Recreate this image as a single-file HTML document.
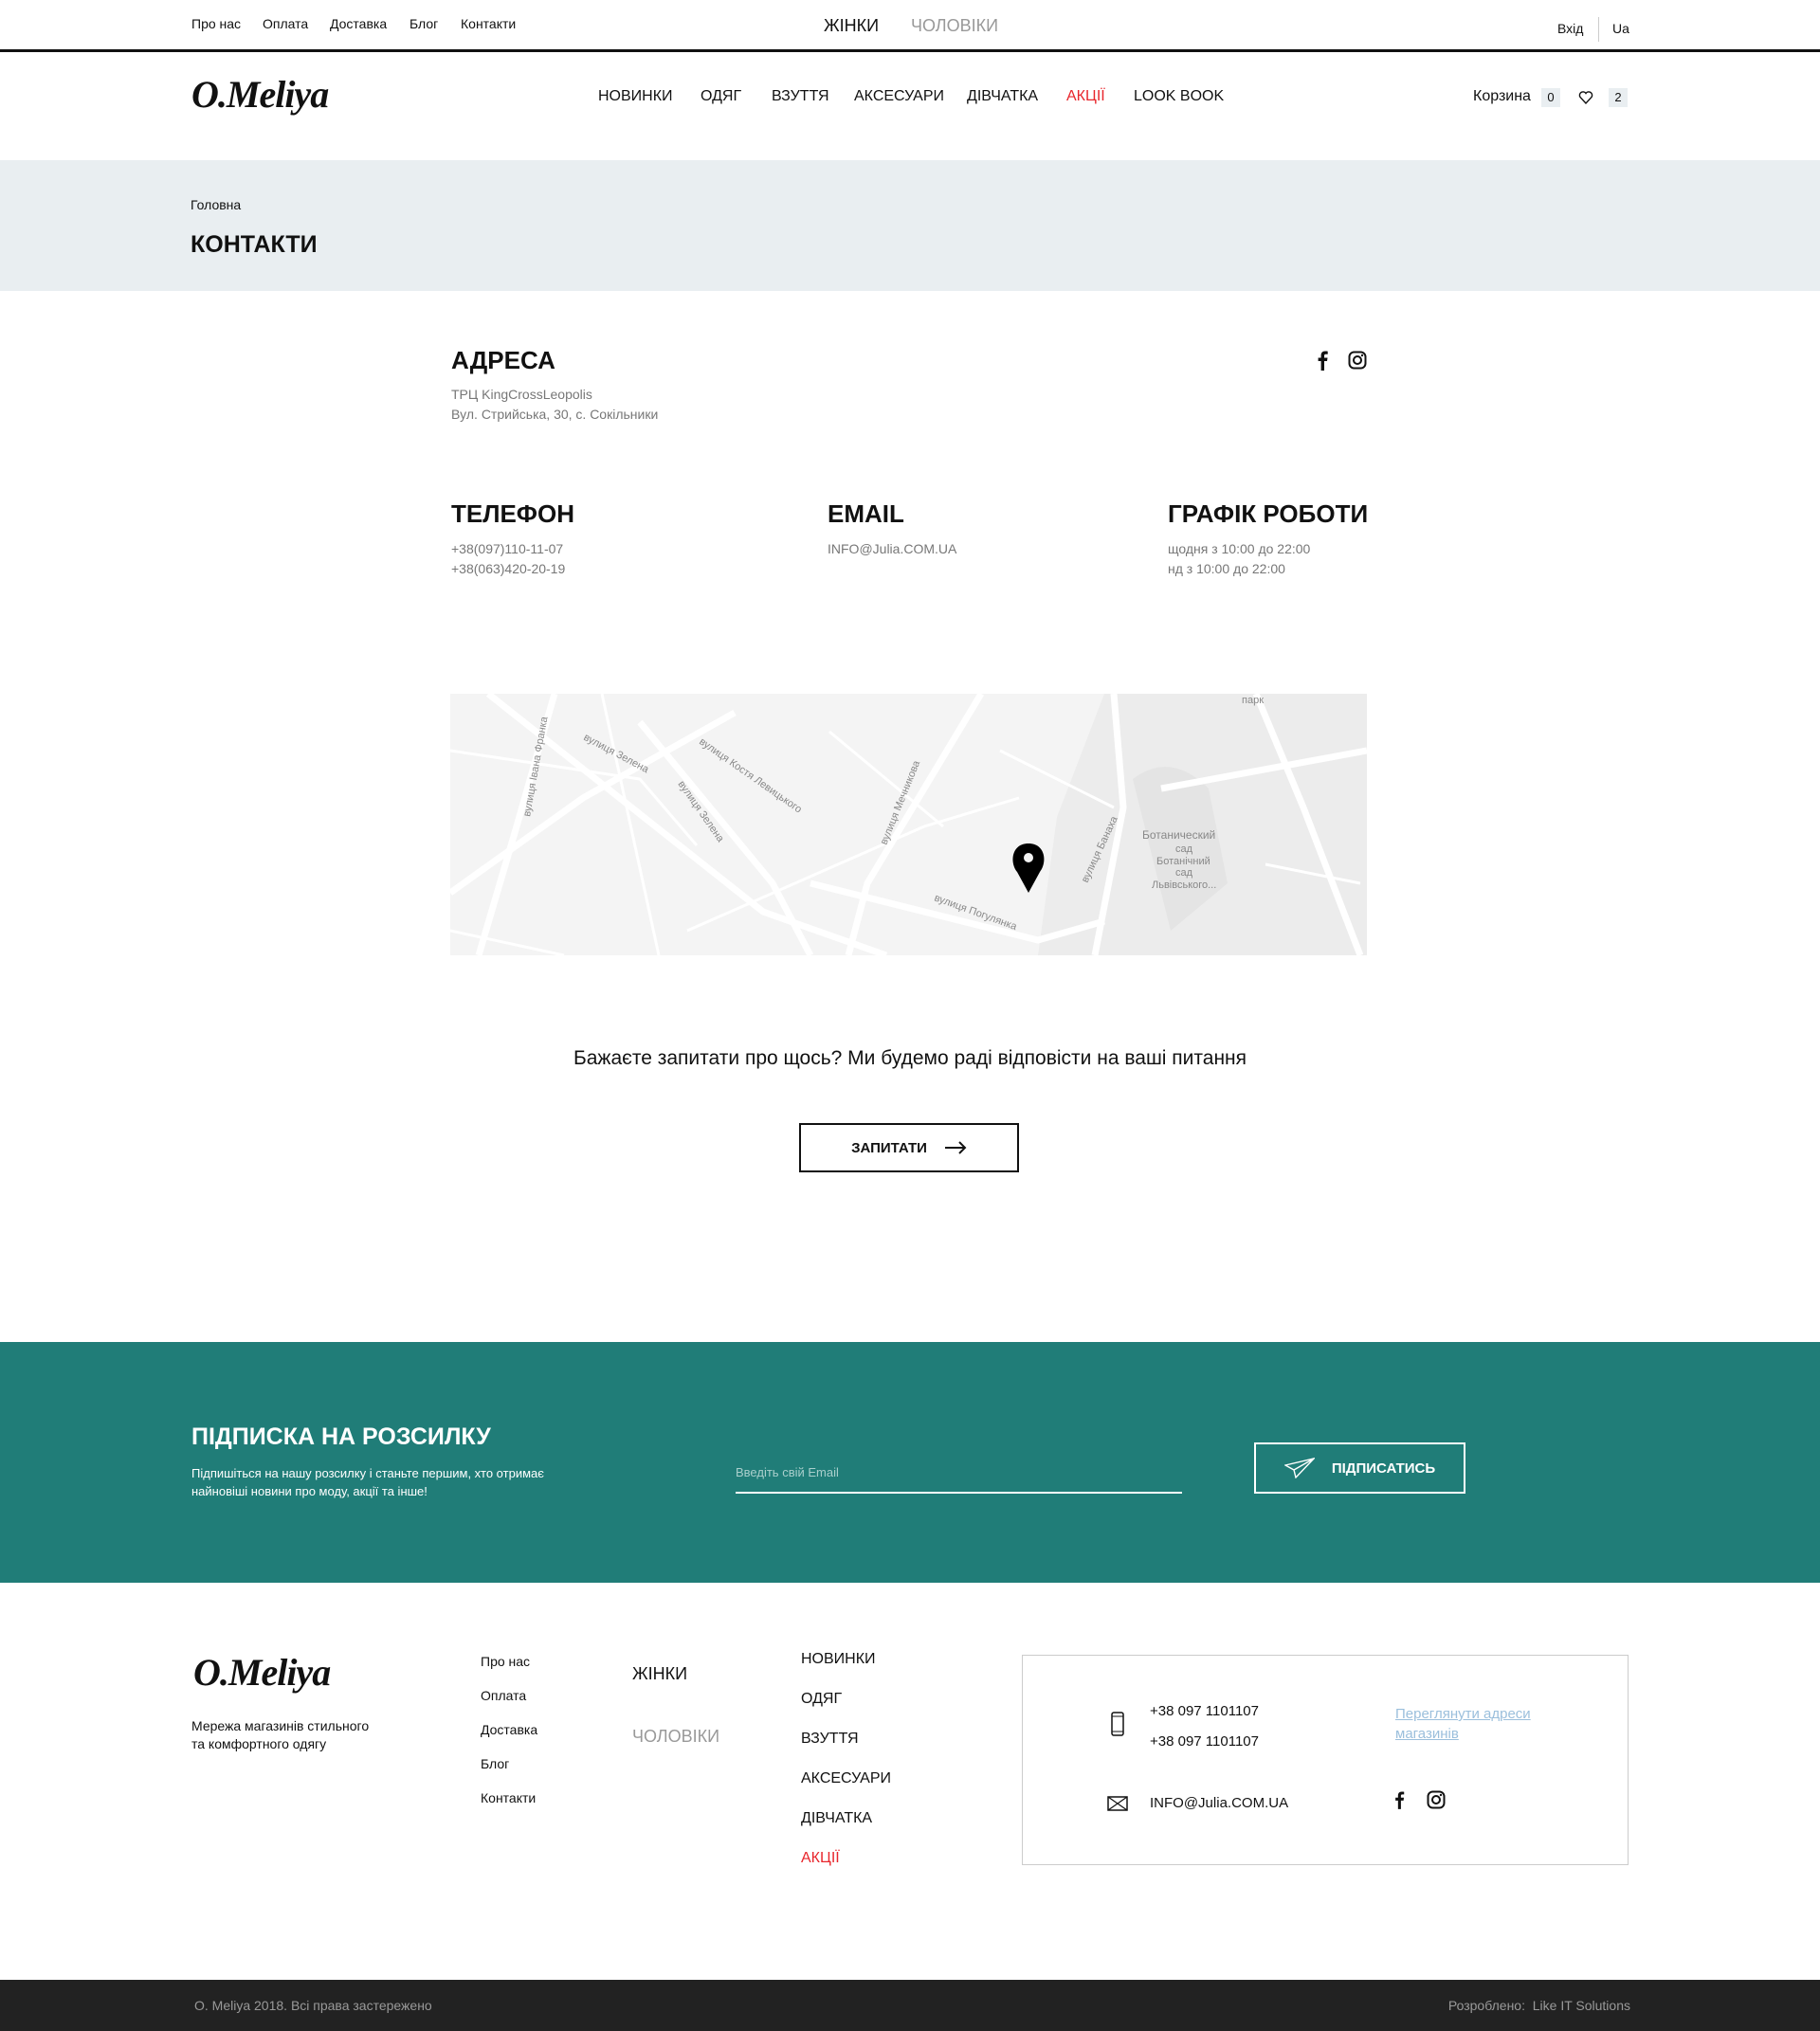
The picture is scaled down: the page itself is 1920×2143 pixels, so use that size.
<!DOCTYPE html>
<html><head><meta charset="utf-8"><style>
*{margin:0;padding:0;box-sizing:border-box}
body{width:1920px;height:2143px;position:relative;font-family:"Liberation Sans","DejaVu Sans",sans-serif;color:#111;background:#fff;overflow:hidden}
.a{position:absolute;white-space:nowrap}
.logo{font-family:"Liberation Serif",serif;font-style:italic;font-weight:bold;font-size:40px;letter-spacing:-1px}
.nav{font-size:16px}
.h{font-weight:bold;font-size:26px}
.g{color:#777;font-size:14px}
</style></head><body>
<div class="a" style="left:202px;top:17px;font-size:14px">Про нас</div>
<div class="a" style="left:277px;top:17px;font-size:14px">Оплата</div>
<div class="a" style="left:348px;top:17px;font-size:14px">Доставка</div>
<div class="a" style="left:432px;top:17px;font-size:14px">Блог</div>
<div class="a" style="left:486px;top:17px;font-size:14px">Контакти</div>
<div class="a" style="left:869px;top:17px;font-size:18px">ЖІНКИ</div>
<div class="a" style="left:961px;top:17px;font-size:18px;color:#999">ЧОЛОВІКИ</div>
<div class="a" style="left:1643px;top:22px;font-size:14px">Вхід</div>
<div class="a" style="left:1686px;top:18px;width:1px;height:26px;background:#ccc"></div>
<div class="a" style="left:1701px;top:22px;font-size:14px">Ua</div>
<div class="a" style="left:0;top:52px;width:1920px;height:3px;background:#111"></div>
<div class="a logo" style="left:202px;top:76px">O.Meliya</div>
<div class="a nav" style="left:631px;top:93px">НОВИНКИ</div>
<div class="a nav" style="left:739px;top:93px">ОДЯГ</div>
<div class="a nav" style="left:814px;top:93px">ВЗУТТЯ</div>
<div class="a nav" style="left:901px;top:93px">АКСЕСУАРИ</div>
<div class="a nav" style="left:1020px;top:93px">ДІВЧАТКА</div>
<div class="a nav" style="left:1125px;top:93px;color:#e8262c">АКЦІЇ</div>
<div class="a nav" style="left:1196px;top:93px">LOOK BOOK</div>
<div class="a" style="left:1554px;top:93px;font-size:16px">Корзина</div>
<div class="a" style="left:1626px;top:93px;width:20px;height:20px;background:#e9eef1;font-size:13px;text-align:center;line-height:20px">0</div>
<svg class="a" style="left:1665px;top:95px" width="16" height="16" viewBox="0 0 16 16"><path d="M8 14 L2 7.5 A3.3 3.3 0 0 1 8 3.5 A3.3 3.3 0 0 1 14 7.5 Z" fill="none" stroke="#111" stroke-width="1.4"/></svg>
<div class="a" style="left:1697px;top:93px;width:20px;height:20px;background:#e9eef1;font-size:13px;text-align:center;line-height:20px">2</div>
<div class="a" style="left:0;top:169px;width:1920px;height:138px;background:#e9eef1"></div>
<div class="a" style="left:201px;top:208px;font-size:14px">Головна</div>
<div class="a" style="left:201px;top:244px;font-size:25px;font-weight:bold">КОНТАКТИ</div>
<div class="a h" style="left:476px;top:365px">АДРЕСА</div>
<div class="a g" style="left:476px;top:408px">ТРЦ KingCrossLeopolis</div>
<div class="a g" style="left:476px;top:429px">Вул. Стрийська, 30, с. Сокільники</div>
<svg class="a" style="left:1386px;top:369px" width="20" height="22" viewBox="0 0 20 22"><path d="M11 22V12h3l.5-3.5H11V6.5c0-1 .3-1.7 1.8-1.7h1.9V1.7C14.3 1.6 13.2 1.5 12 1.5 9.3 1.5 7.6 3.1 7.6 6v2.5H4.6V12h3v10z" fill="#111"/></svg>
<svg class="a" style="left:1422px;top:370px" width="20" height="20" viewBox="0 0 20 20"><rect x="1.5" y="1.5" width="17" height="17" rx="5" fill="none" stroke="#111" stroke-width="2"/><circle cx="10" cy="10" r="4" fill="none" stroke="#111" stroke-width="2"/><circle cx="15" cy="5" r="1.2" fill="#111"/></svg>
<div class="a h" style="left:476px;top:527px">ТЕЛЕФОН</div>
<div class="a g" style="left:476px;top:571px">+38(097)110-11-07</div>
<div class="a g" style="left:476px;top:592px">+38(063)420-20-19</div>
<div class="a h" style="left:873px;top:527px">EMAIL</div>
<div class="a g" style="left:873px;top:571px">INFO@Julia.COM.UA</div>
<div class="a h" style="left:1232px;top:527px">ГРАФІК РОБОТИ</div>
<div class="a g" style="left:1232px;top:571px">щодня з 10:00 до 22:00</div>
<div class="a g" style="left:1232px;top:592px">нд з 10:00 до 22:00</div>
<svg class="a" style="left:475px;top:732px" width="967" height="276" viewBox="0 0 967 276">
<rect width="967" height="276" fill="#f4f4f4"/>
<path d="M690 0 L640 130 L620 276 L967 276 L967 0 Z" fill="#ececec"/>
<path d="M720 90 Q760 60 800 100 L820 200 L760 250 Z" fill="#e4e4e4"/>
<g stroke="#fff" stroke-width="7" fill="none">
<path d="M110 0 L70 140 L30 276"/><path d="M0 210 L140 110 L300 20"/><path d="M40 0 L330 230 L460 276"/>
<path d="M200 30 L340 200 L380 276"/><path d="M560 0 L440 200 L420 276"/><path d="M380 200 L620 260 L690 240"/>
<path d="M700 0 L710 120 L680 276"/><path d="M850 0 L900 120 L960 276"/><path d="M750 100 L967 60"/>
</g>
<g stroke="#fff" stroke-width="3" fill="none">
<path d="M0 60 L200 90 L260 160"/><path d="M160 0 L220 276"/><path d="M250 250 L500 140 L600 110"/><path d="M400 40 L520 140"/><path d="M580 60 L700 120"/><path d="M0 250 L120 276"/><path d="M860 180 L960 200"/>
</g>
<g font-size="11" fill="#888" font-family="Liberation Sans,sans-serif">
<text transform="translate(84 130) rotate(-80)">вулиця Івана Франка</text>
<text transform="translate(140 48) rotate(28)">вулиця Зелена</text>
<text transform="translate(262 52) rotate(35)">вулиця Костя Левицького</text>
<text transform="translate(240 95) rotate(55)">вулиця Зелена</text>
<text transform="translate(460 160) rotate(-68)">вулиця Мечникова</text>
<text transform="translate(510 218) rotate(20)">вулиця Погулянка</text>
<text transform="translate(672 200) rotate(-65)">вулиця Банаха</text>
<text x="730" y="153" font-size="12">Ботанический</text><text x="765" y="167">сад</text><text x="745" y="180">Ботанічний</text><text x="765" y="192">сад</text><text x="740" y="205">Львівського...</text>
<text x="835" y="10">парк</text>
</g>
<path d="M610 158 C592 158 590 178 598 188 L610 210 L622 188 C630 178 628 158 610 158 Z" fill="#000"/><circle cx="610" cy="173" r="5" fill="#f4f4f4"/>
</svg>
<div class="a" style="left:0;top:1105px;width:1920px;text-align:center;font-size:21px">Бажаєте запитати про щось? Ми будемо раді відповісти на ваші питання</div>
<div class="a" style="left:843px;top:1185px;width:232px;height:52px;border:2px solid #111;font-size:15px;font-weight:bold;display:flex;align-items:center;justify-content:center;gap:18px">ЗАПИТАТИ<svg width="24" height="14" viewBox="0 0 24 14"><path d="M1 7H22M16 1L22 7L16 13" fill="none" stroke="#111" stroke-width="2"/></svg></div>
<div class="a" style="left:0;top:1416px;width:1920px;height:254px;background:#207d78"></div>
<div class="a" style="left:202px;top:1502px;color:#fff;font-size:25px;font-weight:bold">ПІДПИСКА НА РОЗСИЛКУ</div>
<div class="a" style="left:202px;top:1545px;color:#fff;font-size:13px;line-height:19px">Підпишіться на нашу розсилку і станьте першим, хто отримає<br>найновіші новини про моду, акції та інше!</div>
<div class="a" style="left:776px;top:1546px;color:#a9cfcc;font-size:13px">Введіть свій Email</div>
<div class="a" style="left:776px;top:1574px;width:471px;height:2px;background:#fff"></div>
<div class="a" style="left:1323px;top:1522px;width:223px;height:54px;border:2px solid #fff;display:flex;align-items:center;justify-content:center;gap:18px;color:#fff;font-weight:bold;font-size:15px"><svg width="32" height="22" viewBox="0 0 32 22"><path d="M1 8L31 1L12 21L10 13Z M10 13L31 1" fill="none" stroke="#fff" stroke-width="1.4"/></svg>ПІДПИСАТИСЬ</div>
<div class="a logo" style="left:204px;top:1741px">O.Meliya</div>
<div class="a" style="left:202px;top:1812px;font-size:14px;line-height:19px">Мережа магазинів стильного<br>та комфортного одягу</div>
<div class="a" style="left:507px;top:1745px;font-size:14px">Про нас</div>
<div class="a" style="left:507px;top:1781px;font-size:14px">Оплата</div>
<div class="a" style="left:507px;top:1817px;font-size:14px">Доставка</div>
<div class="a" style="left:507px;top:1853px;font-size:14px">Блог</div>
<div class="a" style="left:507px;top:1889px;font-size:14px">Контакти</div>
<div class="a" style="left:667px;top:1756px;font-size:18px">ЖІНКИ</div>
<div class="a" style="left:667px;top:1822px;font-size:18px;color:#999">ЧОЛОВІКИ</div>
<div class="a" style="left:845px;top:1742px;font-size:16px">НОВИНКИ</div>
<div class="a" style="left:845px;top:1784px;font-size:16px">ОДЯГ</div>
<div class="a" style="left:845px;top:1826px;font-size:16px">ВЗУТТЯ</div>
<div class="a" style="left:845px;top:1868px;font-size:16px">АКСЕСУАРИ</div>
<div class="a" style="left:845px;top:1910px;font-size:16px">ДІВЧАТКА</div>
<div class="a" style="left:845px;top:1952px;font-size:16px;color:#e8262c">АКЦІЇ</div>
<div class="a" style="left:1078px;top:1746px;width:640px;height:222px;border:1px solid #ccc"></div>
<svg class="a" style="left:1172px;top:1806px" width="14" height="26" viewBox="0 0 14 26"><rect x="1" y="1" width="12" height="24" rx="2" fill="none" stroke="#111" stroke-width="1.5"/><path d="M1 5H13M1 21H13" stroke="#111"/></svg>
<div class="a" style="left:1213px;top:1797px;font-size:15px">+38 097 1101107</div>
<div class="a" style="left:1213px;top:1829px;font-size:15px">+38 097 1101107</div>
<div class="a" style="left:1472px;top:1798px;font-size:15px;color:#9bbfdc;text-decoration:underline;line-height:21px">Переглянути адреси<br>магазинів</div>
<svg class="a" style="left:1168px;top:1895px" width="22" height="16" viewBox="0 0 22 16"><rect x="1" y="1" width="20" height="14" fill="none" stroke="#111" stroke-width="1.5"/><path d="M1 1L21 15M21 1L1 15" stroke="#111" stroke-width="1.2"/></svg>
<div class="a" style="left:1213px;top:1894px;font-size:15px">INFO@Julia.COM.UA</div>
<svg class="a" style="left:1468px;top:1889px" width="18" height="20" viewBox="0 0 20 22"><path d="M11 22V12h3l.5-3.5H11V6.5c0-1 .3-1.7 1.8-1.7h1.9V1.7C14.3 1.6 13.2 1.5 12 1.5 9.3 1.5 7.6 3.1 7.6 6v2.5H4.6V12h3v10z" fill="#111"/></svg>
<svg class="a" style="left:1505px;top:1889px" width="20" height="20" viewBox="0 0 20 20"><rect x="1.5" y="1.5" width="17" height="17" rx="5" fill="none" stroke="#111" stroke-width="2"/><circle cx="10" cy="10" r="4" fill="none" stroke="#111" stroke-width="2"/><circle cx="15" cy="5" r="1.2" fill="#111"/></svg>
<div class="a" style="left:0;top:2089px;width:1920px;height:54px;background:#222"></div>
<div class="a" style="left:205px;top:2108px;font-size:14px;color:#999">O. Meliya 2018. Всі права застережено</div>
<div class="a" style="right:200px;top:2108px;font-size:14px;color:#999">Розроблено:&nbsp; Like IT Solutions</div>
</body></html>
